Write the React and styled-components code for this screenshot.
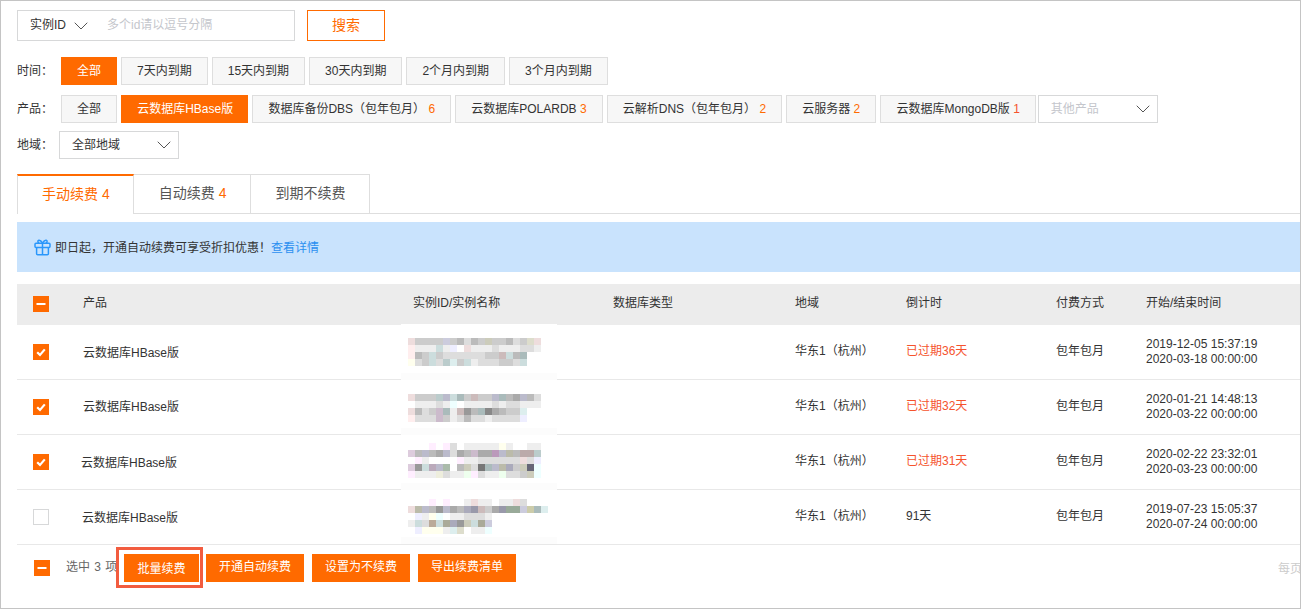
import React from "react";
import styled, { createGlobalStyle } from "styled-components";
import { ChevronDown } from "lucide-react";

const ORANGE = "#ff6a00";

const Global = createGlobalStyle`
  html, body { margin: 0; padding: 0; background: #fff; }
  body { font: 12px/1.4 "Liberation Sans", "Noto Sans CJK SC", sans-serif; color: #333; }
  * { box-sizing: border-box; }
`;

const Page = styled.div`
  width: 1301px;
  height: 609px;
  border: 1px solid #c4c4c4;
  padding: 9px 0 0 16px;
  overflow: hidden;
`;
const SearchRow = styled.div`
  display: flex;
  gap: 12px;
  height: 31px;
`;
const SearchBox = styled.div`
  width: 278px;
  border: 1px solid #d7d8d9;
  display: flex;
  align-items: center;
  padding-left: 12px;
`;
const TypeLabel = styled.span`
  width: 36px;
`;
const Chevron = styled(ChevronDown)`
  color: #555;
  flex: none;
`;
const SearchChevron = styled(Chevron)`
  margin-left: 3px;
`;
const Placeholder = styled.span`
  color: #c4c6cc;
  margin-left: 14px;
`;
const SearchButton = styled.button`
  width: 78px;
  background: #fff;
  border: 1px solid ${ORANGE};
  color: ${ORANGE};
  font: inherit;
  font-size: 14px;
  padding: 0;
`;
const FilterRow = styled.div`
  display: flex;
  align-items: center;
  height: 28px;
  margin-top: ${(p) => p.$top}px;
`;
const FilterLabel = styled.span`
  width: ${(p) => p.$width || 44}px;
  flex: none;
`;
const Options = styled.div`
  display: flex;
  gap: ${(p) => p.$gap || 4}px;
`;
const Option = styled.div`
  height: 28px;
  width: ${(p) => (p.$width ? `${p.$width}px` : "auto")};
  padding: 0 15px;
  display: flex;
  align-items: center;
  white-space: nowrap;
  background: ${(p) => (p.$active ? ORANGE : "#f7f7f7")};
  border: 1px solid ${(p) => (p.$active ? ORANGE : "#dedede")};
  color: ${(p) => (p.$active ? "#fff" : "#333")};
`;
const Count = styled.b`
  font-weight: 400;
  color: ${(p) => p.$color || ORANGE};
  margin-left: ${(p) => p.$gap ?? 3.3}px;
`;
const Select = styled.div`
  width: ${(p) => p.$width}px;
  height: 28px;
  flex: none;
  display: flex;
  align-items: center;
  justify-content: space-between;
  padding: 0 2px 0 ${(p) => p.$pad}px;
  border: 1px solid #d7d8d9;
  background: #fff;
  color: ${(p) => p.$color || "#333"};
  margin-left: ${(p) => p.$left || 0}px;
`;
const Tabs = styled.div`
  display: flex;
  height: 40px;
  margin-top: 15px;
  border-bottom: 1px solid #dedede;
`;
const Tab = styled.div`
  height: ${(p) => (p.$active ? 40 : 39)}px;
  padding: ${(p) => (p.$first ? "0 23px 0 24px" : "0 23px 0 25px")};
  display: flex;
  align-items: center;
  justify-content: center;
  font-size: 14px;
  background: #fff;
  border: 1px solid #dedede;
  border-left-width: ${(p) => (p.$first ? 1 : 0)}px;
  border-bottom-width: 0;
  border-top: ${(p) => (p.$active ? `2px solid ${ORANGE}` : "1px solid #dedede")};
  color: ${(p) => (p.$active ? ORANGE : "#555")};
`;
const Banner = styled.div`
  height: 50px;
  margin-top: 8px;
  background: #c9e3fd;
  display: flex;
  align-items: center;
  padding: 3px 0 0 17px;
`;
const GiftIcon = styled.svg`
  flex: none;
  margin: -3px 4px 0 0;
`;
const DetailLink = styled.a`
  color: #2b8ff0;
`;
const columns = "66px 330px 200px 182px 111px 150px 90px 1fr";
const HeadRow = styled.div`
  display: grid;
  grid-template-columns: ${columns};
  align-items: center;
  height: 41px;
  margin-top: 12px;
  background: #ececec;
`;
const Row = styled.div`
  display: grid;
  grid-template-columns: ${columns};
  align-items: center;
  height: 55px;
  border-bottom: 1px solid #e8e8e8;
`;
const CheckCell = styled.div`
  padding: 0 0 ${(p) => (p.$head ? 1 : 0)}px 16px;
  display: flex;
`;
const Box = styled.span`
  width: 16px;
  height: 16px;
  display: flex;
  align-items: center;
  justify-content: center;
  background: ${(p) => (p.$on ? ORANGE : "#fff")};
  border: 1px solid ${(p) => (p.$on ? ORANGE : "#d7d8d9")};
`;
const Product = styled.div`
  margin-left: ${(p) => p.$nudge || 0}px;
  padding-top: ${(p) => (p.$drop ? 2 : 0)}px;
`;
const Cell = styled.div`
  color: ${(p) => p.$color || "#333"};
  padding-bottom: 2px;
  white-space: nowrap;
`;
const TimeCell = styled(Cell)`
  line-height: 15px;
  padding-bottom: 0;
`;
const IdCell = styled.div`
  position: relative;
  height: 100%;
`;
const Patch = styled.div`
  position: absolute;
  left: -12px;
  top: ${(p) => (p.$first ? -1 : 0)}px;
  bottom: ${(p) => (p.$last ? 0 : -1)}px;
  width: 156px;
  background: linear-gradient(#fff calc(100% - 7px), #fcfcfc 0);
`;
const Mosaic = styled.svg`
  position: absolute;
  left: -5px;
  top: ${(p) => p.$top}px;
  display: block;
`;
const Footer = styled.div`
  display: flex;
  align-items: flex-start;
  padding-top: 2px;
  height: 60px;
`;
const FooterBox = styled(Box)`
  margin: 13px 16px 0 17px;
  flex: none;
`;
const Selected = styled.span`
  margin-top: 12px;
  width: 50px;
  flex: none;
  color: #666;
  white-space: nowrap;
  word-spacing: 1px;
`;
const Highlight = styled.div`
  width: 87px;
  height: 41px;
  flex: none;
  border: 3px solid #f25c3f;
  padding: 4px 5px;
  background: #fff;
`;
const ActionButton = styled.button`
  height: 28px;
  width: ${(p) => p.$width}px;
  margin: ${(p) => (p.$lead ? "7px 0 0 3px" : p.$inner ? "0" : "7px 0 0 8px")};
  background: ${ORANGE};
  border: 0;
  padding: ${(p) => (p.$inner ? "3px 0 0" : "0 0 1px")};
  color: #fff;
  font: inherit;
`;
const PageSize = styled.span`
  margin: 14px 0 0 auto;
  width: 22px;
  overflow: hidden;
  white-space: nowrap;
  color: #ccc;
`;

const mosaics = [
  { top: 13, rows: [
    "edd ccc ccc ccc ccc ccd ccc bbb ddd bbb ccc ccb ccc ccc bbb ddd ccc ddc edd",
    "fee eee eee eee cdd eee eef fff edd eee eee eee ddd eee eee eee ddd ddd eee",
    "fee bbb ccc cdd ccc ddd ddd ddd ddd ddd ddd ccc ccc cbb cdd bbb abb fff fff",
    "ffe ddd ccc cdd ddd bcc dee ccc cdd eee ddd ddd ddd ccc ccc ddd cdd fff fff",
  ] },
  { top: 14, rows: [
    "edd ccc ccc ccc bcc bbc cdd abb ccc cbb ccc ccc bbc abb bbb aaa bbc bbb ddd",
    "fff eee eee eee ddd eee eff fff eee eee eee eee ddd eee ddd ddd eee eee eee",
    "edd bbb ddd ccc cbc abb eee cbb 999 bbb abb 888 aaa bbb ccc ccc dee fff fff",
    "fee ddd ddd ddd cbc ccc eee ddd bbb ddd ddd eee ddd ddd ddd ddd eef fff fff",
  ] },
  { top: 8, rows: [
    "fff fff fff fef fff fef ddd fff eee eee eee eee eee ffe eee fff fff eee eee",
    "dcd bbb bbc bbb aaa bbc ddd aaa bbb cbc aaa aaa b9b bbc bba bbb baa baa bcc",
    "fff fef eee fff fff fff fff fef eee eee ddd ddd ddd ddd ddd ddd edd ddd eef",
    "dcd 999 cdd bab bbc aba fff bbb ccb ddd 777 abb bbc bba aab ccc ccb 667 eff",
    "fef eee eee eee eed ddd eee eee efe fef ddd eee eee efe ddd ddd ccc ccb eff",
  ] },
  { top: 9, rows: [
    "fff fff fff fef fff fef fff fff eee edd eee eee fff eee eee edd ddd fff fff fff",
    "edd bba bbc bbb 999 bbc aaa bbb aab 99a cbb ccc aaa 99a 9a9 9a9 ccd cca abb dee",
    "fff eef eee ffe eff fff eee eee ddd ddd ddd eee fff fff fff fff fff fff fff fff",
    "eee cdd ddd ba9 cdd aa9 aab 999 ccb cdd aa9 ccd fff fff fff fff fff fff fff fff",
    "fff eef ffe ffe ffe eee dee ddc fff eee eee eff fff fff fff fff fff fff fff fff",
  ] },
];

const rows = [
  { on: true, nudge: 0, drop: true, time: ["2019-12-05 15:37:19", "2020-03-18 00:00:00"], left: "已过期36天" },
  { on: true, nudge: 0, time: ["2020-01-21 14:48:13", "2020-03-22 00:00:00"], left: "已过期32天" },
  { on: true, nudge: -2, drop: true, time: ["2020-02-22 23:32:01", "2020-03-23 00:00:00"], left: "已过期31天" },
  { on: false, nudge: -1, drop: true, time: ["2019-07-23 15:05:37", "2020-07-24 00:00:00"], left: "91天", plain: true },
];

const Check = () => (
  <svg width="12" height="12" viewBox="0 0 12 12" fill="none">
    <path d="M2.2 6.2 5 9l4.8-5.6" stroke="#fff" strokeWidth="2.2" />
  </svg>
);
const Dash = () => (
  <svg width="10" height="4" viewBox="0 0 10 4">
    <rect x="0.5" y="1" width="9" height="2" fill="#fff" />
  </svg>
);
const GiftGlyph = () => (
  <GiftIcon width="17" height="17" viewBox="0 0 17 17" fill="none" stroke="#2a97fb" strokeWidth="1.5">
    <rect x="1" y="4.2" width="15" height="4.3" rx="1" />
    <path d="M2.6 8.5v6.2a1 1 0 0 0 1 1h9.8a1 1 0 0 0 1-1V8.5M8.5 4.2v11.5" />
    <path d="M8.5 4.2C7.4 2.2 6 1 4.8 1.2 3.4 1.5 3.6 3.8 5.2 4.2M8.5 4.2c1.100-2 2.500-3.200 3.700-3 1.400.3 1.200 2.600-.4 3" />
  </GiftIcon>
);

const MosaicImage = ({ data }) => {
  const w = Math.max(...data.rows.map((r) => r.split(" ").length)) * 7;
  return (
    <Mosaic $top={data.top} width={w} height={data.rows.length * 7} shapeRendering="crispEdges">
      {data.rows.flatMap((r, y) =>
        r.split(" ").map((c, x) => (
          <rect key={`${x}-${y}`} x={x * 7} y={y * 7} width="7" height="7" fill={`#${c}`} />
        ))
      )}
    </Mosaic>
  );
};

export default function App() {
  return (
    <Page>
      <Global />
      <SearchRow>
        <SearchBox>
          <TypeLabel>实例ID</TypeLabel>
          <SearchChevron size={24} strokeWidth={1} />
          <Placeholder>多个id请以逗号分隔</Placeholder>
        </SearchBox>
        <SearchButton>搜索</SearchButton>
      </SearchRow>
      <FilterRow $top={16}>
        <FilterLabel>时间：</FilterLabel>
        <Options>
          <Option $active>全部</Option>
          {["7天内到期", "15天内到期", "30天内到期", "2个月内到期", "3个月内到期"].map((t) => (
            <Option key={t}>{t}</Option>
          ))}
        </Options>
      </FilterRow>
      <FilterRow $top={10}>
        <FilterLabel>产品：</FilterLabel>
        <Options $gap={4.2}>
          <Option>全部</Option>
          <Option $active $width={127}>云数据库HBase版</Option>
          <Option>数据库备份DBS（包年包月）<Count>6</Count></Option>
          <Option>云数据库POLARDB<Count>3</Count></Option>
          <Option>云解析DNS（包年包月）<Count>2</Count></Option>
          <Option>云服务器<Count>2</Count></Option>
          <Option>云数据库MongoDB版<Count $color="#f5532d">1</Count></Option>
        </Options>
        <Select $width={120} $pad={12} $color="#c4c6cc" $left={2}>
          其他产品
          <Chevron size={24} strokeWidth={1} />
        </Select>
      </FilterRow>
      <FilterRow $top={8}>
        <FilterLabel $width={42}>地域：</FilterLabel>
        <Select $width={120} $pad={12}>
          全部地域
          <Chevron size={24} strokeWidth={1} />
        </Select>
      </FilterRow>
      <Tabs>
        <Tab $active $first>手动续费<Count $gap={4}>4</Count></Tab>
        <Tab>自动续费<Count $gap={4}>4</Count></Tab>
        <Tab>到期不续费</Tab>
      </Tabs>
      <Banner>
        <GiftGlyph />
        即日起，开通自动续费可享受折扣优惠！
        <DetailLink>查看详情</DetailLink>
      </Banner>
      <HeadRow>
        <CheckCell $head><Box $on><Dash /></Box></CheckCell>
        <Cell>产品</Cell>
        <Cell>实例ID/实例名称</Cell>
        <Cell>数据库类型</Cell>
        <Cell>地域</Cell>
        <Cell>倒计时</Cell>
        <Cell>付费方式</Cell>
        <Cell>开始/结束时间</Cell>
      </HeadRow>
      {rows.map((r, i) => (
        <Row key={i}>
          <CheckCell><Box $on={r.on}>{r.on && <Check />}</Box></CheckCell>
          <Product $nudge={r.nudge} $drop={r.drop}>云数据库HBase版</Product>
          <IdCell>
            <Patch $first={i === 0} $last={i === 3} />
            <MosaicImage data={mosaics[i]} />
          </IdCell>
          <div />
          <Cell>华东1（杭州）</Cell>
          <Cell $color={r.plain ? "#333" : "#f5532d"}>{r.left}</Cell>
          <Cell>包年包月</Cell>
          <TimeCell>{r.time[0]}<br />{r.time[1]}</TimeCell>
        </Row>
      ))}
      <Footer>
        <FooterBox $on><Dash /></FooterBox>
        <Selected>选中 3 项</Selected>
        <Highlight><ActionButton $inner $width={75}>批量续费</ActionButton></Highlight>
        <ActionButton $lead $width={98}>开通自动续费</ActionButton>
        <ActionButton $width={98}>设置为不续费</ActionButton>
        <ActionButton $width={98}>导出续费清单</ActionButton>
        <PageSize>每页显示</PageSize>
      </Footer>
    </Page>
  );
}
